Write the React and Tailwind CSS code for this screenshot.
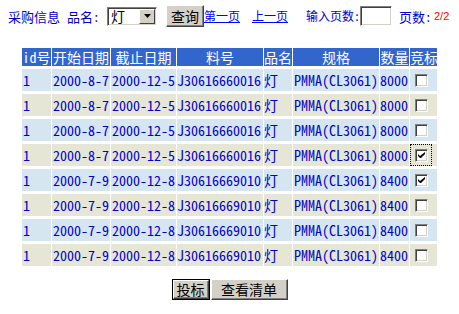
import { useState } from "react";

// Old-style procurement list page: search bar, bid table, submit buttons
const rows = [
  { id: 1, start: "2000-8-7", end: "2000-12-5", no: "J30616660016", name: "灯", spec: "PMMA(CL3061)", qty: 8000, checked: false },
  { id: 1, start: "2000-8-7", end: "2000-12-5", no: "J30616660016", name: "灯", spec: "PMMA(CL3061)", qty: 8000, checked: false },
  { id: 1, start: "2000-8-7", end: "2000-12-5", no: "J30616660016", name: "灯", spec: "PMMA(CL3061)", qty: 8000, checked: false },
  { id: 1, start: "2000-8-7", end: "2000-12-5", no: "J30616660016", name: "灯", spec: "PMMA(CL3061)", qty: 8000, checked: true, focus: true },
  { id: 1, start: "2000-7-9", end: "2000-12-8", no: "J30616669010", name: "灯", spec: "PMMA(CL3061)", qty: 8400, checked: true },
  { id: 1, start: "2000-7-9", end: "2000-12-8", no: "J30616669010", name: "灯", spec: "PMMA(CL3061)", qty: 8400, checked: false },
  { id: 1, start: "2000-7-9", end: "2000-12-8", no: "J30616669010", name: "灯", spec: "PMMA(CL3061)", qty: 8400, checked: false },
  { id: 1, start: "2000-7-9", end: "2000-12-8", no: "J30616669010", name: "灯", spec: "PMMA(CL3061)", qty: 8400, checked: false },
];

function CheckBox({ checked, focus, onToggle }) {
  return (
    <span
      onClick={onToggle}
      className={
        "flex w-[22px] h-[22px] items-center justify-center border border-dotted " +
        (focus ? "border-black" : "border-transparent")
      }
    >
      <span className="flex w-[13px] h-[13px] items-center justify-center bg-white border border-t-[#808080] border-l-[#808080] border-b-white border-r-white shadow-[inset_1px_1px_0_#404040,inset_-1px_-1px_0_#d4d0c8]">
        {checked && (
          <svg width="7" height="7" viewBox="0 0 7 7">
            <path d="M0 2 L0 4 L2 6 L3 6 L7 2 L7 0 L2 4 Z" fill="#000" />
          </svg>
        )}
      </span>
    </span>
  );
}

function App() {
  const [items, setItems] = useState(rows);

  function toggle(i) {
    setItems((prev) => prev.map((r, j) => (j === i ? { ...r, checked: !r.checked } : r)));
  }

  const btn =
    "flex items-center justify-center bg-[#d4d0c8] text-black border border-t-white border-l-white border-b-[#404040] border-r-[#404040] shadow-[inset_-1px_-1px_0_#808080]";

  return (
    <div className="w-[459px] h-[314px] overflow-hidden bg-white font-['Noto_Sans_Mono_CJK_SC','Noto_Sans_CJK_SC',monospace] text-[#0000cc]">
      {/* search bar */}
      <div className="flex items-center h-[32px] pl-[8px] text-[13px] leading-none whitespace-nowrap">
        <span className="w-[59px] shrink-0">采购信息</span>
        <span className="w-[40px] shrink-0">品名:</span>
        <div className="flex shrink-0 w-[50px] h-[19px] bg-white border border-t-[#808080] border-l-[#808080] border-b-white border-r-white shadow-[inset_1px_1px_0_#404040,inset_-1px_-1px_0_#d4d0c8]">
          <span className="flex-1 pl-[3px] flex items-center text-black text-[14px]">灯</span>
          <span className="w-[16px] m-[1px] flex items-center justify-center bg-[#d4d0c8] border border-t-white border-l-white border-b-[#404040] border-r-[#404040]">
            <svg width="7" height="4" viewBox="0 0 7 4">
              <path d="M0 0 H7 L3.5 4 Z" fill="#000" />
            </svg>
          </span>
        </div>
        <button className={btn + " shrink-0 ml-[9px] w-[38px] h-[22px] text-[14px]"}>查询</button>
        <a href="#" className="shrink-0 w-[36px] text-[12px] text-[#0000ff] underline">第一页</a>
        <a href="#" className="shrink-0 ml-[12px] w-[36px] text-[12px] text-[#0000ff] underline">上一页</a>
        <span className="shrink-0 ml-[18px] w-[54px] text-[12px]">输入页数:</span>
        <span className="shrink-0 w-[32px] h-[20px] bg-white border border-t-[#808080] border-l-[#808080] border-b-white border-r-white shadow-[inset_1px_1px_0_#404040,inset_-1px_-1px_0_#d4d0c8]" />
        <span className="shrink-0 ml-[7px] w-[35px]">页数:</span>
        <span className="shrink-0 text-[11px] text-[#ff0000] font-['Liberation_Sans',sans-serif]">2/2</span>
      </div>

      {/* bid table */}
      <table className="mt-[13px] mx-auto w-[417px] table-fixed border-separate border-spacing-x-[1px] border-spacing-y-[3px] text-[14px] leading-none">
        <thead>
          <tr className="h-[18px] bg-[#3366cc] text-white">
            <th className="w-[29px] p-0 font-normal whitespace-nowrap">id号</th>
            <th className="w-[58px] p-0 font-normal whitespace-nowrap">开始日期</th>
            <th className="w-[65px] p-0 font-normal whitespace-nowrap">截止日期</th>
            <th className="w-[86px] p-0 font-normal whitespace-nowrap">料号</th>
            <th className="w-[28px] p-0 font-normal whitespace-nowrap">品名</th>
            <th className="w-[86px] p-0 font-normal whitespace-nowrap">规格</th>
            <th className="w-[29px] p-0 font-normal whitespace-nowrap">数量</th>
            <th className="w-[27px] p-0 font-normal whitespace-nowrap">竞标</th>
          </tr>
        </thead>
        <tbody>
          {items.map((r, i) => (
            <tr key={i} className={"h-[22px] " + (i % 2 === 0 ? "bg-[#d6e6f0]" : "bg-[#e6e6d6]")}>
              <td className="p-0 pl-[1px] whitespace-nowrap overflow-hidden">{r.id}</td>
              <td className="p-0 pl-[1px] whitespace-nowrap overflow-hidden">{r.start}</td>
              <td className="p-0 pl-[1px] whitespace-nowrap overflow-hidden">{r.end}</td>
              <td className="p-0 whitespace-nowrap overflow-hidden">{r.no}</td>
              <td className="p-0 whitespace-nowrap overflow-hidden">{r.name}</td>
              <td className="p-0 pl-[1px] whitespace-nowrap overflow-hidden">{r.spec}</td>
              <td className="p-0 whitespace-nowrap overflow-hidden">{r.qty}</td>
              <td className="p-0">
                <CheckBox checked={r.checked} focus={r.focus} onToggle={() => toggle(i)} />
              </td>
            </tr>
          ))}
        </tbody>
      </table>

      {/* actions */}
      <div className="mt-[10px] flex justify-center">
        <span className="border border-black">
          <button className={btn + " w-[36px] h-[19px] text-[14px]"}>投标</button>
        </span>
        <button className={btn + " ml-[1px] w-[77px] h-[21px] text-[14px]"}>查看清单</button>
      </div>
    </div>
  );
}

export default App;
